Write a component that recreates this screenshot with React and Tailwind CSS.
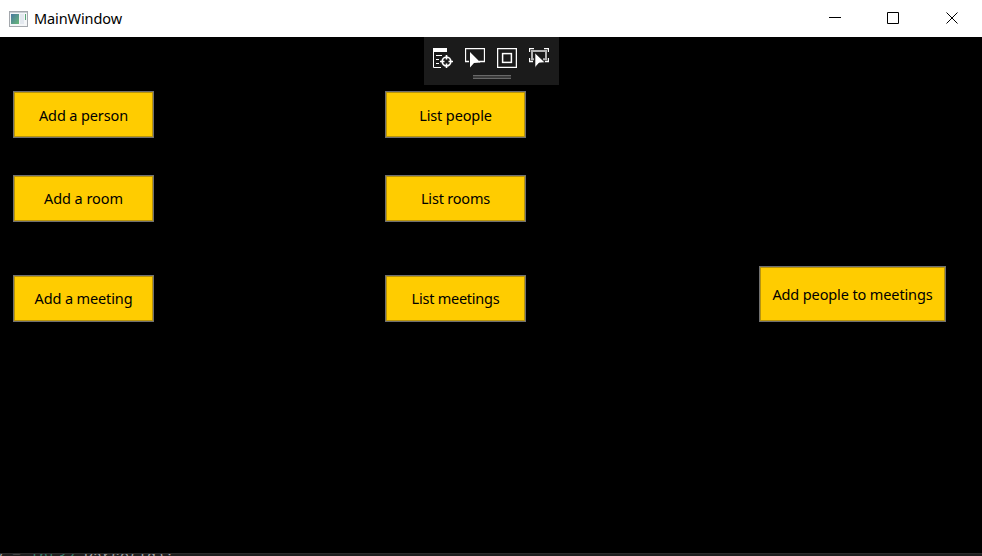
import React from "react";

function AppButton({ label, className = "", textClass = "tracking-[-0.12px]" }) {
  return (
    <button className={`flex items-center justify-center border border-[#707070] bg-[#ffcc00] text-black shadow-[inset_0_0_0_1px_#b8940c] ${className}`}>
      <span className={`whitespace-nowrap text-[14.5px] leading-5 ${textClass}`}>{label}</span>
    </button>
  );
}

function WindowIcon() {
  return (
    <svg width="19" height="16" viewBox="0 0 19 16" shapeRendering="crispEdges">
      <rect x="0.5" y="0.5" width="18" height="15" fill="#f4f6f8" stroke="#a4a8ad" />
      <rect x="1" y="1" width="17" height="1" fill="#c9ced4" />
      <defs>
        <linearGradient id="pane" x1="0" y1="0" x2="1" y2="1">
          <stop offset="0" stopColor="#4878a0" />
          <stop offset="1" stopColor="#68b878" />
        </linearGradient>
      </defs>
      <rect x="2" y="3" width="8" height="10" fill="url(#pane)" />
      <rect x="11" y="3" width="4" height="10" fill="#e3e8ef" />
      <rect x="16" y="3" width="1" height="6" fill="#58a878" />
    </svg>
  );
}

function TreeIcon() {
  return (
    <svg width="20" height="20" viewBox="0 0 20 20" fill="none" stroke="#fff">
      <path d="M0 0h14v4H0z" fill="#fff" stroke="none" />
      <path d="M.5 4v15.500H8M3 7.500h6M3 11.500h3M3 15.500h3" />
      <circle cx="13.500" cy="13.500" r="4.300" strokeWidth="1.700" />
      <path d="M13.500 7v4.500M13.500 15.500V20M7 13.500h4.500M15.500 13.500H20" strokeWidth="1.600" />
    </svg>
  );
}

function SelectIcon() {
  return (
    <svg width="20" height="20" viewBox="0 0 20 20" fill="none" stroke="#fff">
      <path d="M4 13.500H.5V.5h19v13H14" strokeWidth="1.300" />
      <path d="M5 4v15.500l4-4.500 6.500-.5z" fill="#fff" stroke="none" />
    </svg>
  );
}

function AdornerIcon() {
  return (
    <svg width="20" height="20" viewBox="0 0 20 20" fill="none" stroke="#fff">
      <rect x=".6" y=".6" width="18.800" height="18.800" strokeWidth="1.300" />
      <rect x="5.600" y="5.600" width="8.800" height="8.800" strokeWidth="1.500" />
    </svg>
  );
}

function TrackIcon() {
  return (
    <svg width="20" height="20" viewBox="0 0 20 20" fill="none" stroke="#fff">
      <path d="M.5 4V.5H5M15 .5h4.500V4M.5 10v3.500H4M16 13.500h3.500V10" strokeWidth="1.400" />
      <path d="M5 11.300H3V3h14v8.300h-3" stroke="#b4b4b4" strokeWidth="2" />
      <path d="M6 5v14.500l4-4.500 6-.5z" fill="#fff" stroke="#1b1b1b" strokeWidth=".6" />
    </svg>
  );
}

export default function App() {
  return (
    <div className="flex h-[556px] w-[982px] flex-col overflow-hidden bg-black font-['Noto_Sans','Open_Sans',sans-serif]">
      <header className="flex h-[37px] shrink-0 items-center bg-white pl-[9px] text-black">
        <WindowIcon />
        <span className="mb-0.5 ml-1.5 text-[14.5px] leading-5 tracking-[-0.1px]">MainWindow</span>
        <svg className="ml-auto" width="153" height="37" viewBox="0 0 153 37" fill="none" stroke="#000">
          <path d="M0 17.500h12M58.500 12.500h11v11h-11z" />
          <path d="m117.500 12.500 11 11m0-11-11 11" />
        </svg>
      </header>
      <main className="flex flex-1 flex-col">
        <div className="ml-[424px] flex h-12 w-[135px] flex-col items-center bg-[#1b1b1b] pt-[11px]">
          <div className="mr-px flex gap-3">
            <TreeIcon />
            <SelectIcon />
            <AdornerIcon />
            <TrackIcon />
          </div>
          <div className="mt-[7px] h-1 w-[38px] border-y border-[#686868] bg-[#3a3a3a]" />
        </div>
        <div className="mt-1.5 grid grid-cols-[372px_374px_187px] grid-rows-[84px_91px_56px] pl-[13px]">
          <AppButton label="Add a person" className="h-[47px] w-[141px]" />
          <AppButton label="List people" className="h-[47px] w-[141px]" />
          <span />
          <AppButton label="Add a room" className="h-[47px] w-[141px]" textClass="mb-0.5 tracking-[-0.05px]" />
          <AppButton label="List rooms" className="h-[47px] w-[141px]" textClass="mb-0.5 tracking-[-0.2px]" />
          <span />
          <AppButton label="Add a meeting" className="h-[47px] w-[141px] self-end" textClass="mb-0.5 tracking-[-0.12px]" />
          <AppButton label="List meetings" className="h-[47px] w-[141px] self-end" textClass="mb-0.5 tracking-[-0.25px]" />
          <AppButton label="Add people to meetings" className="h-14 w-[187px]" />
        </div>
      </main>
      <footer className="h-[3px] shrink-0 overflow-hidden border-t border-[#2a2a2a] bg-[#1e1e1e]">
        <pre className="-mt-[6px] -ml-1.5 font-['Liberation_Mono',monospace] text-[15px] leading-5 text-[#a0a0a0]">y = <span className="text-[#347a68]">Int32</span>.Parse(Id);</pre>
      </footer>
    </div>
  );
}
